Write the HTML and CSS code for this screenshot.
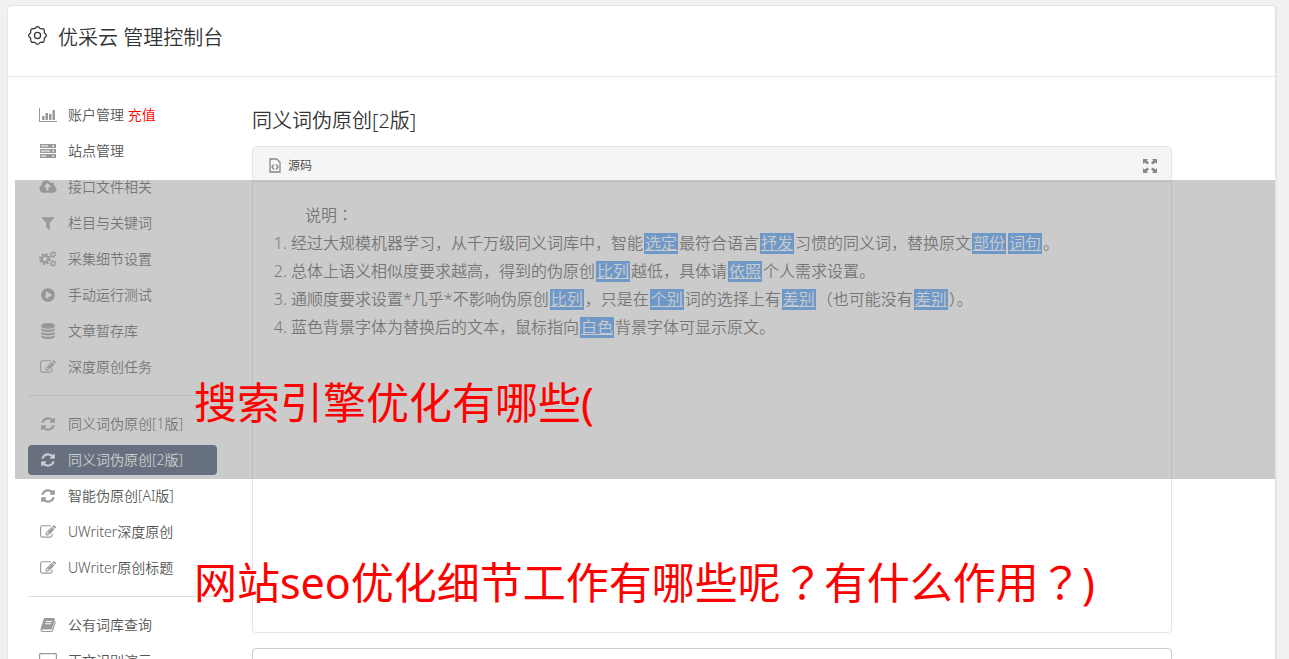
FILE: index.html
```html
<!DOCTYPE html>
<html lang="zh-CN">
<head>
  <meta charset="UTF-8">
  <meta name="viewport" content="width=device-width, initial-scale=1.0">
  <title>优采云 管理控制台</title>
  <link rel="stylesheet" href="styles.css">
</head>
<body>
  <!-- 图标定义 -->
  <svg class="defs" aria-hidden="true">
    <symbol id="i-gear" viewBox="0 0 18 18">
      <g fill="none" stroke="currentColor" stroke-width="1.2" stroke-linejoin="round">
        <path d="M6.400 2.600Q9-1.400 11.600 2.600Q16.350 1.650 15.400 6.400Q19.400 9 15.400 11.600Q16.350 16.350 11.600 15.400Q9 19.400 6.400 15.400Q1.650 16.350 2.600 11.600Q-1.400 9 2.600 6.400Q1.650 1.650 6.400 2.600z"/>
        <circle cx="9" cy="9" r="2.900"/>
      </g>
    </symbol>
    <symbol id="i-chart" viewBox="0 0 18 16">
      <path fill="currentColor" d="M0 1h1v13h17v1H0zM3 9h2.500v4H3zM6.500 6H9v7H6.500zM10 7h2.500v6H10zM13.500 3H16v10h-2.500z"/>
    </symbol>
    <symbol id="i-server" viewBox="-1 -1 18 16">
      <path fill="currentColor" fill-rule="evenodd" d="M0 0h16v4H0zM1 1.500v1h7v-1zM12.500 1.300v1.400H14V1.300zM0 5h16v4H0zM1 6.500v1h9v-1zM12.500 6.300v1.400H14V6.300zM0 10h16v4H0zM1 11.500v1h5v-1zM12.500 11.300v1.400H14v-1.400z"/>
    </symbol>
    <symbol id="i-upload" viewBox="-64 0 1920 1792">
      <path fill="currentColor" d="M1216 864q0-14-9-23l-352-352q-9-9-23-9t-23 9l-351 351q-10 12-10 24 0 14 9 23t23 9h224v352q0 13 9.500 22.500t22.500 9.500h192q13 0 22.500-9.500t9.500-22.500v-352h224q13 0 22.500-9.500t9.500-22.500zm640 288q0 159-112.500 271.500t-271.500 112.500h-1088q-185 0-316.500-131.500t-131.500-316.500q0-130 70-240t188-165q-2-30-2-43 0-212 150-362t362-150q156 0 285.500 87t188.500 231q71-62 166-62 106 0 181 75t75 181q0 76-41 138 130 31 213.500 135.500t83.500 238.500z"/>
    </symbol>
    <symbol id="i-filter" viewBox="0 0 1792 1792">
      <path fill="currentColor" d="M1595 295q17 41-14 70l-493 493v742q0 42-39 59-13 5-25 5-27 0-45-19l-256-256q-19-19-19-45v-486l-493-493q-31-29-14-70 17-39 59-39h1280q42 0 59 39z"/>
    </symbol>
    <symbol id="i-cogs" viewBox="0 0 18 16">
      <g fill="none" stroke="currentColor">
        <circle cx="6" cy="8" r="3.300" stroke-width="2.200"/>
        <circle cx="6" cy="8" r="5.100" stroke-width="1.800" stroke-dasharray="2 2.005"/>
        <circle cx="14" cy="3.500" r="1.900" stroke-width="1.200"/>
        <circle cx="14" cy="3.500" r="2.900" stroke-width="1.200" stroke-dasharray="1.300 1.737"/>
        <circle cx="14" cy="12.500" r="1.900" stroke-width="1.200"/>
        <circle cx="14" cy="12.500" r="2.900" stroke-width="1.200" stroke-dasharray="1.300 1.737"/>
      </g>
    </symbol>
    <symbol id="i-play" viewBox="0 0 1792 1792">
      <path fill="currentColor" d="M896 128q209 0 385.500 103t279.500 279.500 103 385.500-103 385.500-279.500 279.500-385.500 103-385.500-103-279.500-279.500-103-385.500 103-385.500 279.500-279.500 385.500-103zm384 823q32-18 32-55t-32-55l-544-320q-31-19-64-1-32 19-32 56v640q0 37 32 56 16 8 32 8 17 0 32-9z"/>
    </symbol>
    <symbol id="i-database" viewBox="0 0 1792 1792">
      <path fill="currentColor" d="M896 768q237 0 443-43t325-127v170q0 69-103 128t-280 93.500-385 34.500-385-34.500-280-93.500-103-128v-170q119 84 325 127t443 43zm0 768q237 0 443-43t325-127v170q0 69-103 128t-280 93.500-385 34.500-385-34.500-280-93.500-103-128v-170q119 84 325 127t443 43zm0-384q237 0 443-43t325-127v170q0 69-103 128t-280 93.500-385 34.500-385-34.500-280-93.500-103-128v-170q119 84 325 127t443 43zm0-1152q208 0 385 34.500t280 93.500 103 128v128q0 69-103 128t-280 93.500-385 34.500-385-34.500-280-93.500-103-128v-128q0-69 103-128t280-93.500 385-34.500z"/>
    </symbol>
    <symbol id="i-edit" viewBox="0 0 1792 1792">
      <path fill="currentColor" d="M888 1184l116-116-152-152-116 116v56h96v96h56zm440-720q-16-16-33 1l-350 350q-17 17-1 33t33-1l350-350q17-17 1-33zm80 594v190q0 119-84.500 203.500t-203.500 84.500h-832q-119 0-203.500-84.500t-84.500-203.500v-832q0-119 84.500-203.500t203.500-84.500h832q63 0 117 25 15 7 18 23 3 17-9 29l-49 49q-14 14-32 8-23-6-45-6h-832q-66 0-113 47t-47 113v832q0 66 47 113t113 47h832q66 0 113-47t47-113v-126q0-13 9-22l64-64q15-15 35-7t20 29zm-96-738l288 288-672 672h-288v-288zm444 132l-92 92-288-288 92-92q28-28 68-28t68 28l152 152q28 28 28 68t-28 68z"/>
    </symbol>
    <symbol id="i-refresh" viewBox="0 0 1792 1792">
      <path fill="currentColor" d="M1639 1056q0 5-1 7-64 268-268 434.500t-478 166.500q-146 0-282.500-55t-243.500-157l-129 129q-19 19-45 19t-45-19-19-45v-448q0-26 19-45t45-19h448q26 0 45 19t19 45-19 45l-137 137q71 66 161 102t187 36q134 0 250-65t186-179q11-17 53-117 8-23 30-23h192q13 0 22.500 9.500t9.500 22.500zm25-800v448q0 26-19 45t-45 19h-448q-26 0-45-19t-19-45 19-45l138-138q-148-137-349-137-134 0-250 65t-186 179q-11 17-53 117-8 23-30 23h-199q-13 0-22.500-9.500t-9.500-22.500v-7q65-268 270-434.500t480-166.500q146 0 284 55.500t245 156.500l130-129q19-19 45-19t45 19 19 45z"/>
    </symbol>
    <symbol id="i-book" viewBox="0 0 16 16">
      <path fill="currentColor" fill-rule="evenodd" d="M5.300 1h8.200c1 0 1.500.7 1.200 1.700l-2.600 8.500c-.3 1-.9 1.300-1.900 1.300H2.300c-.5 0-.7.3-.6.7.1.500.600.700 1.200.700h8c.7 0 1-.3 1.200-.900l2.700-9c.8.400 1.100.9.800 1.800L13.100 13.600c-.3.900-1 1.400-1.900 1.400H2.800C1.300 15 .1 13.700.5 12.300L3.600 2.300C3.900 1.400 4.400 1 5.300 1zM6 4l-.3.900h6L12 4zM5.300 6.300l-.3.900h6l.3-.9z"/>
    </symbol>
    <symbol id="i-desktop" viewBox="0 0 18 16">
      <path fill="currentColor" fill-rule="evenodd" d="M1.500 0h15C17.300 0 18 .7 18 1.500v9.500c0 .8-.7 1.500-1.500 1.500H11V15h2v1H5v-1h2v-2.500H1.500C.7 12.500 0 11.800 0 11V1.500C0 .7.700 0 1.500 0zM1.200 1.200v8.300h15.600V1.200z"/>
    </symbol>
    <symbol id="i-code" viewBox="0 0 12 15">
      <g fill="none" stroke="currentColor" stroke-width="1.300">
        <path d="M1 1h6.800L11 4.200V14H1zM5 6.500L2.900 9 5 11.500M7 6.500L9.100 9 7 11.500"/>
      </g>
    </symbol>
    <symbol id="i-expand" viewBox="0 0 14 14">
      <path fill="currentColor" d="M0 0h5L3.700 1.500 6 3.800 4.500 5.500 1.500 3.600 0 5zM14 0H9l1.300 1.500L8 3.800 9.500 5.500l3-1.900L14 5zM0 14h5l-1.300-1.500L6 10.200 4.500 8.500l-3 1.900L0 9zM14 14H9l1.300-1.500L8 10.200l1.500-1.700 3 1.900L14 9z"/>
    </symbol>
  </svg>

  <div class="page">
    <div class="container">
      <header class="header">
        <svg class="header-icon"><use href="#i-gear"/></svg>
        <h1>优采云 管理控制台</h1>
      </header>

      <div class="content">
        <!-- 左侧菜单 -->
        <nav class="menu">
          <a href="#"><svg><use href="#i-chart"/></svg><span>账户管理 <em>充值</em></span></a>
          <a href="#"><svg><use href="#i-server"/></svg><span>站点管理</span></a>
          <a href="#"><svg><use href="#i-upload"/></svg><span>接口文件相关</span></a>
          <a href="#"><svg><use href="#i-filter"/></svg><span>栏目与关键词</span></a>
          <a href="#"><svg><use href="#i-cogs"/></svg><span>采集细节设置</span></a>
          <a href="#"><svg><use href="#i-play"/></svg><span>手动运行测试</span></a>
          <a href="#"><svg><use href="#i-database"/></svg><span>文章暂存库</span></a>
          <a href="#"><svg><use href="#i-edit"/></svg><span>深度原创任务</span></a>
          <hr>
          <a href="#"><svg><use href="#i-refresh"/></svg><span>同义词伪原创[1版]</span></a>
          <a href="#" class="active"><svg><use href="#i-refresh"/></svg><span>同义词伪原创[2版]</span></a>
          <a href="#"><svg><use href="#i-refresh"/></svg><span>智能伪原创[AI版]</span></a>
          <a href="#"><svg><use href="#i-edit"/></svg><span>UWriter深度原创</span></a>
          <a href="#"><svg><use href="#i-edit"/></svg><span>UWriter原创标题</span></a>
          <hr>
          <a href="#"><svg><use href="#i-book"/></svg><span>公有词库查询</span></a>
          <a href="#"><svg><use href="#i-desktop"/></svg><span>正文识别演示</span></a>
        </nav>

        <!-- 编辑区 -->
        <main class="main">
          <h2>同义词伪原创[2版]</h2>
          <section class="editor">
            <div class="toolbar">
              <button type="button" class="source"><svg><use href="#i-code"/></svg>源码</button>
              <button type="button" class="expand" aria-label="全屏"><svg><use href="#i-expand"/></svg></button>
            </div>
            <div class="text">
              <p>说明<span class="punct" lang="ja">：</span></p>
              <ol>
                <li>经过大规模机器学习，从千万级同义词库中，智能<mark>选定</mark>最符合语言<mark>抒发</mark>习惯的同义词，替换原文<mark>部份</mark><mark>词句</mark>。</li>
                <li>总体上语义相似度要求越高，得到的伪原创<mark>比列</mark>越低，具体请<mark>依照</mark>个人需求设置。</li>
                <li>通顺度要求设置*几乎*不影响伪原创<mark>比列</mark>，只是在<mark>个别</mark>词的选择上有<mark>差别</mark>（也可能没有<mark>差别</mark>）。</li>
                <li>蓝色背景字体为替换后的文本，鼠标指向<mark>白色</mark>背景字体可显示原文。</li>
              </ol>
            </div>
          </section>
          <div class="result"></div>
        </main>
      </div>
    </div>

    <!-- 标题遮罩 -->
    <div class="caption">
      <p class="band">搜索引擎优化有哪些(</p>
      <p>网站seo优化细节工作有哪些呢<span class="punct" lang="ja">？</span>有什么作用<span class="punct" lang="ja">？</span>)</p>
    </div>
  </div>
</body>
</html>
```
FILE: styles.css
```css
* { box-sizing: border-box; }
body {
  margin: 0;
  background-color: #f1f1f1;
  color: #333;
  font-family: "Noto Sans", "Noto Sans CJK SC", sans-serif;
  font-weight: 350;
  font-size: 14px;
}
h1, h2, p, ol { margin: 0; padding: 0; }
.defs { position: absolute; width: 0; height: 0; }
.page {
  position: relative;
  height: 100vh;
  overflow: hidden;
  padding: 5px 12px 0 7px;
}
.container {
  background-color: #fff;
  border: 1px solid #e5e5e5;
  border-right-width: 2px;
  border-radius: 5px;
}
.header {
  display: flex;
  align-items: center;
  height: 71px;
  padding: 0 20px 6px;
  border-bottom: 1px solid #e5e5e5;
}
.header-icon { width: 19px; height: 19px; margin: 0 11px 5px 0; }
h1, h2 {
  font-size: 20px;
  font-weight: 350;
  line-height: 30px;
}
.content {
  display: flex;
  gap: 35px;
  padding: 23px 103px 0 20px;
}

/* 左侧菜单 */
.menu { flex: 0 0 189px; }
.menu a {
  display: flex;
  align-items: center;
  gap: 11px;
  height: 30px;
  margin-bottom: 6px;
  padding-left: 11px;
  border-radius: 4px;
  color: #555;
  line-height: 30px;
  text-decoration: none;
  white-space: nowrap;
}
.menu svg { width: 18px; height: 16px; color: #999; }
.menu em { color: #f00; font-style: normal; }
.menu a.active { background-color: #374965; color: #fff; }
.menu a.active svg { color: #fff; }
.menu hr {
  height: 1px;
  margin: 13px 0;
  border: 0;
  background-color: #ddd;
}

/* 编辑区 */
.main { flex: 1; min-width: 0; padding-top: 6px; }
.editor {
  height: 487px;
  margin-top: 10px;
  border: 1px solid #e5e5e5;
  border-radius: 4px;
}
.toolbar {
  display: flex;
  align-items: center;
  justify-content: space-between;
  height: 35px;
  padding: 3px 14px 0 16px;
  border-bottom: 1px solid #ddd;
  background-color: #f5f5f5;
}
.toolbar button {
  display: flex;
  align-items: center;
  gap: 7px;
  padding: 0;
  border: 0;
  background: none;
  color: #444;
  font: inherit;
  font-size: 12px;
  line-height: 18px;
}
.toolbar svg { width: 12px; height: 15px; color: #888; }
.toolbar .expand svg { width: 14px; height: 14px; }
.text {
  padding: 19px 20px;
  color: #555;
  font-size: 16px;
  line-height: 28px;
}
.text p { text-indent: 2em; }
.text ol { padding-left: 18px; }
.text mark {
  display: inline-block;
  margin: 0 1px;
  padding: 0 1px;
  background-color: #4399f7;
  color: #fff;
  line-height: 21px;
  text-decoration: underline;
}
/* 标点居中 */
.punct { font-family: "Noto Sans CJK JP", sans-serif; line-height: 1; }
.result {
  height: 80px;
  margin-top: 15px;
  border: 1px solid #ccc;
  border-radius: 4px;
}

/* 标题遮罩 */
.caption {
  position: absolute;
  top: 180px;
  left: 15px;
  right: 14px;
  color: #f00;
  font-size: 43px;
  font-weight: 400;
  line-height: 60px;
}
.caption p { padding: 74px 179px 0; white-space: nowrap; }
.caption .band {
  height: 299px;
  padding-top: 193px;
  background-color: rgba(151, 151, 151, 0.5);
}
```
